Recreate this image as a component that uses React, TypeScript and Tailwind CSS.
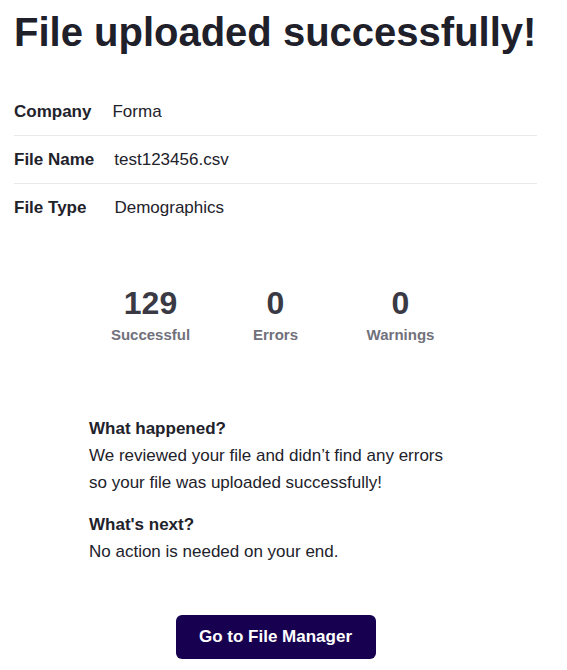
export default function App() {
  const details = [
    { label: "Company", value: "Forma", gap: "ml-[21px]" },
    { label: "File Name", value: "test123456.csv", gap: "ml-[20px]" },
    { label: "File Type", value: "Demographics", gap: "ml-[28px]" },
  ];

  const stats = [
    { value: "129", label: "Successful" },
    { value: "0", label: "Errors" },
    { value: "0", label: "Warnings" },
  ];

  return (
    <div className="w-[567px] min-h-[670px] bg-white pl-[14px] pr-[30px] font-['Liberation_Sans',Arial,sans-serif] text-[#22222b]">
      {/* Title */}
      <h1 className="pt-[8px] text-[40px] leading-[48px] font-bold text-[#20202b]">
        File uploaded successfully!
      </h1>

      {/* Details */}
      <div className="mt-[32px]">
        {details.map((row, i) => (
          <div
            key={row.label}
            className={`h-[48px] flex items-center text-[17px] ${
              i < details.length - 1 ? "border-b border-[#e9e9ec]" : ""
            }`}
          >
            <span className="font-bold">{row.label}</span>
            <span className={row.gap}>{row.value}</span>
          </div>
        ))}
      </div>

      {/* Stats */}
      <div className="mt-[51px] flex justify-center">
        {stats.map((s) => (
          <div key={s.label} className="w-[125px] flex flex-col items-center">
            <span className="text-[32px] leading-[40px] font-bold text-[#3a3a45]">
              {s.value}
            </span>
            <span className="mt-[2px] text-[15px] leading-[20px] font-bold text-[#71717c]">
              {s.label}
            </span>
          </div>
        ))}
      </div>

      {/* Summary */}
      <div className="mt-[71px] ml-[75px] w-[360px] text-[17px]">
        <h2 className="text-[17px] leading-[25px] font-bold">What happened?</h2>
        <p className="mt-px leading-[27px]">
          We reviewed your file and didn’t find any errors so your file was
          uploaded successfully!
        </p>
        <h2 className="mt-[16px] text-[17px] leading-[25px] font-bold">
          What's next?
        </h2>
        <p className="mt-px leading-[27px]">No action is needed on your end.</p>
      </div>

      {/* Action */}
      <div className="mt-[50px] flex justify-center">
        <button className="w-[200px] h-[44px] rounded-[6px] bg-[#170050] text-white text-[17px] font-bold">
          Go to File Manager
        </button>
      </div>
    </div>
  );
}
